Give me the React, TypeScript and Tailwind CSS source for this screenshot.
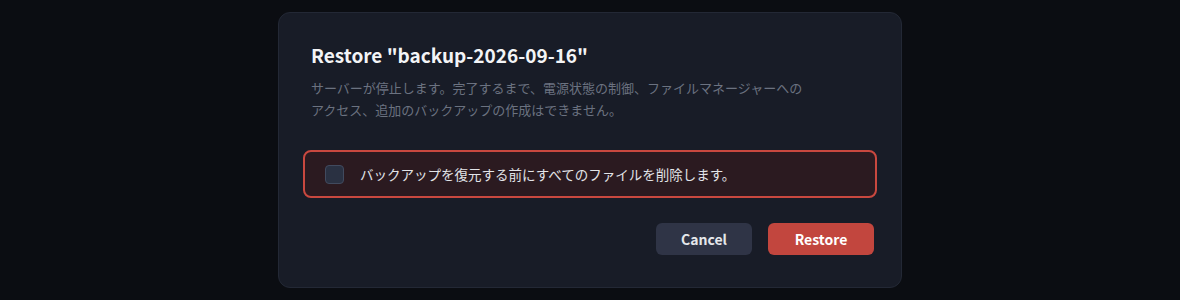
import React from "react";

export default function App() {
  return (
    <div
      className="w-full h-[300px] bg-[#0b0d12] flex justify-center overflow-hidden"
      style={{ fontFamily: '"Noto Sans CJK JP", "Noto Sans", sans-serif' }}
    >
      <div className="mt-3 w-[624px] h-[276px] rounded-xl border border-[#232835] bg-[#181c27] px-6 pt-7 pb-8 flex flex-col">
        <h2 className="px-2 text-[19px] leading-[28px] font-bold text-[#f3f4f6]">
          Restore "backup-2026-09-16"
        </h2>
        <p className="px-2 mt-2 max-w-[512px] text-[13px] leading-[22px] text-[#6b7280]">
          サーバーが停止します。完了するまで、電源状態の制御、ファイルマネージャーへのアクセス、追加のバックアップの作成はできません。
        </p>
        <label className="mt-[29px] h-[50px] flex items-center rounded-lg border-2 border-[#c9483f] bg-[#2b1a20] pl-[20px]">
          <span className="w-[19px] h-[19px] rounded-[4px] border border-[#414a5e] bg-[#2a3142] shrink-0" />
          <span className="ml-4 text-[13.5px] text-[#e2e4e8]">
            バックアップを復元する前にすべてのファイルを削除します。
          </span>
        </label>
        <div className="mt-[25px] flex justify-end gap-4 pr-[3px]">
          <button className="w-[96px] h-8 rounded-md bg-[#2f3446] text-[14px] font-bold text-[#e5e7eb]">
            Cancel
          </button>
          <button className="w-[106px] h-8 rounded-md bg-[#c2463e] text-[14px] font-bold text-white">
            Restore
          </button>
        </div>
      </div>
    </div>
  );
}
